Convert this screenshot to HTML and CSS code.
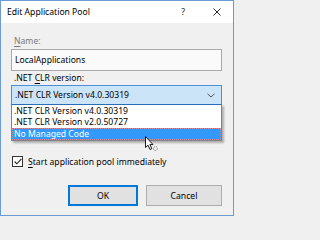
FILE: index.html
```html
<!DOCTYPE html>
<html>
<head>
<meta charset="utf-8">
<link rel="stylesheet" href="styles.css">
</head>
<body>
<div class="window">
  <div class="titlebar">
    <span class="title">Edit Application Pool</span>
    <span class="tb-btn help">?</span>
    <span class="tb-btn close">
      <svg width="8" height="8" viewBox="0 0 8 8"><path d="M0.5 0.5 L7.5 7.5 M7.5 0.5 L0.5 7.5" stroke="#111" stroke-width="0.9"/></svg>
    </span>
  </div>
  <div class="content">
    <div class="label disabled"><u>N</u>ame:</div>
    <div class="textbox">LocalApplications</div>
    <div class="label clr">.NET <u>C</u>LR version:</div>
    <div class="combo-wrap">
      <div class="combo">
        <span>.NET CLR Version v4.0.30319</span>
        <svg class="chev" width="8" height="5" viewBox="0 0 8 5"><path d="M0.5 0.8 L4 4 L7.5 0.8" fill="none" stroke="#444" stroke-width="0.9"/></svg>
      </div>
      <div class="dropdown">
        <div class="item">.NET CLR Version v4.0.30319</div>
        <div class="item">.NET CLR Version v2.0.50727</div>
        <div class="item selected">No Managed Code</div>
      </div>
      <svg class="cursor" width="14" height="16" viewBox="0 0 14 16">
        <path d="M0.5 0.5 L0.5 11.5 L3 9.2 L5 13.5 L6.8 12.7 L4.9 8.6 L8 8.6 Z" fill="#fff" stroke="#000" stroke-width="0.9" stroke-linejoin="round"/>
        <circle cx="10.5" cy="12.5" r="2" fill="none" stroke="#666" stroke-width="0.8" stroke-dasharray="1.3 0.9"/>
      </svg>
    </div>
    <label class="check">
      <span class="box">
        <svg width="8" height="7" viewBox="0 0 8 7"><path d="M0.6 3.5 L2.9 5.8 L7.4 0.9" fill="none" stroke="#222" stroke-width="1.1"/></svg>
      </span>
      <span><u>S</u>tart application pool immediately</span>
    </label>
    <div class="buttons">
      <div class="btn default">OK</div>
      <div class="btn cancel">Cancel</div>
    </div>
  </div>
</div>
</body>
</html>
```
FILE: styles.css
```css
html, body {
  margin: 0;
  padding: 0;
  background: #f0f0f0;
}
body {
  font-family: "Noto Sans", "Open Sans", sans-serif;
  font-size: 8.6px;
  color: #000;
}
u {
  text-decoration-thickness: 1px;
  text-underline-offset: 1.5px;
}
.window {
  width: 234px;
  height: 216px;
  box-sizing: border-box;
  border: 1px solid #6b9bd2;
  display: flex;
  flex-direction: column;
  background: #f0f0f0;
}
.titlebar {
  height: 22px;
  background: #fff;
  display: flex;
  align-items: center;
  padding-left: 6px;
  flex-shrink: 0;
}
.title {
  flex: 1;
  color: #000;
  line-height: 12px;
}
.tb-btn {
  display: flex;
  justify-content: center;
  align-items: center;
  line-height: 12px;
}
.help {
  width: 10px;
  margin-right: 24px;
  color: #222;
}
.close {
  width: 10px;
  margin-right: 11px;
}
.content {
  padding: 12px 11px 0 10px;
  display: flex;
  flex-direction: column;
}
.label {
  height: 12px;
  line-height: 12px;
  padding-left: 3px;
}
.disabled {
  color: #7a7a7a;
}
.textbox {
  margin-top: 2px;
  height: 22px;
  box-sizing: border-box;
  border: 1px solid #a9a9a9;
  background: #fafafa;
  line-height: 20px;
  padding-left: 3px;
}
.clr {
  margin-top: 1px;
}
.combo-wrap {
  position: relative;
  margin-top: 1px;
}
.combo {
  height: 20px;
  box-sizing: border-box;
  border: 1px solid #4a90d9;
  background: #cce4f7;
  display: flex;
  align-items: center;
  justify-content: space-between;
  padding: 0 6px 0 3px;
}
.chev {
  margin-top: 1px;
}
.dropdown {
  position: absolute;
  left: 0;
  right: 0;
  top: 19px;
  background: #fff;
  border: 1px solid #828282;
  border-top: 1px solid #2b6cb8;
  box-shadow: 2px 2px 2px rgba(0, 0, 0, 0.28);
  padding-top: 1px;
}
.item {
  height: 11px;
  line-height: 11px;
  padding-left: 2px;
}
.item.selected {
  height: 12px;
  line-height: 12px;
  background: #3399ff;
  color: #fff;
  outline: 1px dotted #d08a9a;
  outline-offset: -1px;
}
.cursor {
  position: absolute;
  left: 134px;
  top: 51px;
}
.check {
  margin-top: 50px;
  height: 13px;
  display: flex;
  align-items: center;
}
.box {
  width: 11px;
  height: 11px;
  box-sizing: border-box;
  border: 1px solid #333;
  background: #fff;
  display: flex;
  align-items: center;
  justify-content: center;
  margin: 0 5px 0 1px;
}
.buttons {
  margin-top: 17px;
  display: flex;
  justify-content: flex-end;
  gap: 8px;
}
.btn {
  height: 21px;
  box-sizing: border-box;
  border: 1px solid #adadad;
  background: #e1e1e1;
  display: flex;
  align-items: center;
  justify-content: center;
  line-height: 12px;
}
.btn.default {
  width: 70px;
  border: 2px solid #0078d7;
}
.btn.cancel {
  width: 76px;
}
```
